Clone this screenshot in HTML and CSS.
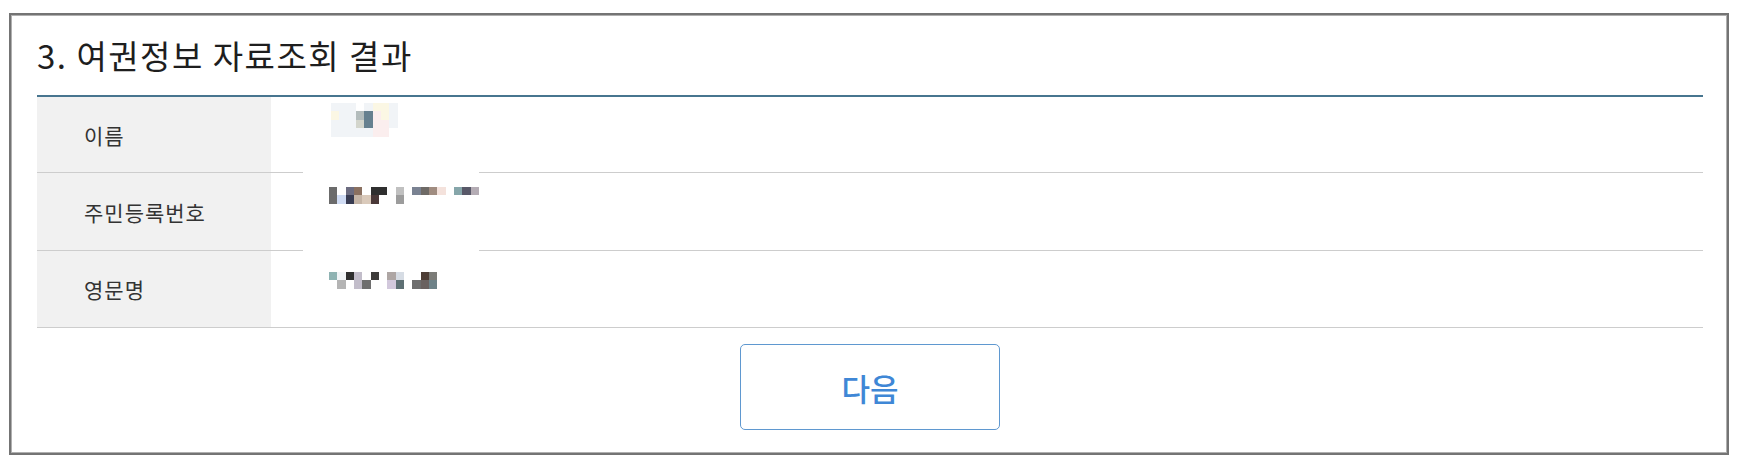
FILE: index.html
```html
<!DOCTYPE html>
<html>
<head>
    <link rel="stylesheet" href="styles.css">
</head>

<body>
    <div class="result-box">
        <h2 class="result-title">3. 여권정보 자료조회 결과</h2>

        <div class="info-table">
            <div class="info-row">
                <div class="info-label">이름</div>
                <div class="info-value">
                    <div class="mosaic mosaic-name">
                        <span class="pa"></span><span class="pa"></span><span class="pa"></span><span></span><span class="pa"></span><span class="pb"></span><span class="pb"></span><span class="pa"></span>
                        <span class="pb"></span><span class="pa"></span><span class="pa"></span><span class="g1"></span><span class="slate"></span><span class="pc"></span><span class="pb"></span><span class="pa"></span>
                        <span class="pa"></span><span class="pa"></span><span class="pa"></span><span class="g2"></span><span class="slate"></span><span class="pc"></span><span class="pc"></span><span class="pa"></span>
                        <span class="pa"></span><span class="pa"></span><span class="pa"></span><span class="pa"></span><span class="pa"></span><span class="pc"></span><span class="pc"></span><span></span>
                    </div>
                </div>
            </div>
            <div class="info-row">
                <div class="info-label">주민등록번호</div>
                <div class="info-value redacted">
                    <div class="mosaic mosaic-id">
                        <span class="gray"></span><span></span><span class="indigo"></span><span class="brown"></span><span></span><span class="black"></span><span class="black"></span><span></span><span class="silver"></span><span></span><span class="steel"></span><span class="stone"></span><span class="taupe"></span><span class="rose"></span><span></span><span class="teal"></span><span class="ink"></span><span class="mist"></span>
                        <span class="gray"></span><span class="sky"></span><span class="navy"></span><span class="tan"></span><span class="beige"></span><span class="plum"></span><span></span><span></span><span class="ash"></span><span></span><span></span><span></span><span></span><span></span><span></span><span></span><span></span><span></span>
                    </div>
                </div>
            </div>
            <div class="info-row">
                <div class="info-label">영문명</div>
                <div class="info-value">
                    <div class="mosaic mosaic-eng">
                        <span class="aqua"></span><span class="pa"></span><span class="black"></span><span class="lav"></span><span></span><span class="char"></span><span></span><span class="dust"></span><span class="ice"></span><span></span><span></span><span class="cocoa"></span><span class="olive"></span>
                        <span></span><span class="light"></span><span></span><span class="lav"></span><span class="mid"></span><span></span><span></span><span class="lilac"></span><span class="slate2"></span><span></span><span class="mid"></span><span class="dim"></span><span class="sea"></span>
                    </div>
                </div>
            </div>
        </div>

        <div class="btn-container">
            <button type="button" class="next-btn">다음</button>
        </div>
    </div>
</body>
</html>
```

FILE: styles.css
```css
body {
    margin: 13px 13px 11px 9px;
    background-color: #fff;
    font-family: "Noto Sans CJK KR", "Noto Sans", sans-serif;
    color: #222;
}

.result-box {
    border: 2px solid #747474;
    box-shadow: inset 0 0 0 1px #b0b0b0;
    padding: 1px 24px 23px 26px;
    background-color: #fff;
}

.result-title {
    margin: 0;
    padding: 15px 0 16px 0;
    font-size: 33px;
    letter-spacing: 1.5px;
    font-weight: normal;
    color: #1e1e1e;
    border-bottom: 2px solid #47758f;
}

.info-row {
    display: flex;
    height: 76px;
    border-bottom: 1px solid #cdcdcd;
    box-sizing: border-box;
}

.info-row:nth-child(2) {
    height: 78px;
}

.info-row:nth-child(3) {
    height: 77px;
}

.info-label {
    width: 234px;
    padding-left: 47px;
    box-sizing: border-box;
    background-color: #f1f1f1;
    display: flex;
    align-items: center;
    font-size: 21px;
    letter-spacing: 1px;
    color: #333;
}

.info-value {
    flex: 1;
    padding-left: 58px;
    position: relative;
}

/* white patch left by the redaction over the row lines */
.info-value.redacted::before {
    content: "";
    position: absolute;
    left: 32px;
    top: -20px;
    width: 176px;
    height: 112px;
    background-color: #fff;
}

.mosaic {
    position: relative;
    display: grid;
    grid-auto-rows: 8.4px;
}

.mosaic-name {
    grid-template-columns: repeat(8, 8.33px);
    margin-top: 6px;
    margin-left: 2px;
}

.mosaic-id {
    grid-template-columns: repeat(18, 8.33px);
    margin-top: 14px;
}

.mosaic-eng {
    grid-template-columns: repeat(13, 8.33px);
    margin-top: 21px;
}

.pa { background-color: #f1f4f7; }
.pb { background-color: #fbf7e4; }
.pc { background-color: #fbeeee; }
.g1 { background-color: #b3bcbc; }
.g2 { background-color: #d3d5cc; }
.slate { background-color: #66808f; }
.gray { background-color: #6b6b6b; }
.sky { background-color: #d0dcf4; }
.indigo { background-color: #6c6c80; }
.navy { background-color: #383c52; }
.brown { background-color: #8a7060; }
.tan { background-color: #c4b4a6; }
.beige { background-color: #dacabb; }
.black { background-color: #2f2f2f; }
.plum { background-color: #4a3838; }
.silver { background-color: #c0c0c0; }
.ash { background-color: #9c9c9c; }
.steel { background-color: #7a8292; }
.stone { background-color: #6e6a66; }
.taupe { background-color: #a08c80; }
.rose { background-color: #f4e2dc; }
.teal { background-color: #86a6aa; }
.ink { background-color: #585868; }
.mist { background-color: #b4acb4; }
.aqua { background-color: #8fb3b3; }
.lav { background-color: #c2bdca; }
.lilac { background-color: #d2c8dc; }
.dust { background-color: #aea6a4; }
.ice { background-color: #d6dce4; }
.slate2 { background-color: #5e7074; }
.cocoa { background-color: #4e3e36; }
.dim { background-color: #6a6260; }
.olive { background-color: #7c7c78; }
.sea { background-color: #6e8288; }
.light { background-color: #b4b4b4; }
.char { background-color: #3e3c3a; }
.mid { background-color: #6e6e6e; }

.btn-container {
    display: flex;
    justify-content: center;
    padding-top: 16px;
}

.next-btn {
    width: 260px;
    height: 86px;
    border: 1px solid #5f98d0;
    border-radius: 5px;
    background-color: #fff;
    font-family: "Noto Sans CJK KR", sans-serif;
    font-size: 31px;
    font-weight: 500;
    color: #3f87d6;
    cursor: pointer;
}
```
